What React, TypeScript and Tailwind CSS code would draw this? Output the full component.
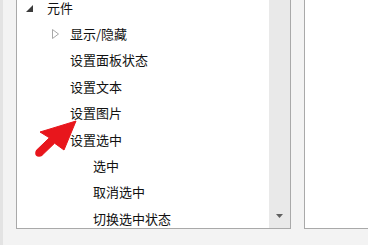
const font = { fontFamily: '"Noto Sans CJK SC", "Noto Sans", sans-serif' };

function FilledCaret() {
  return (
    <svg width="7" height="7" viewBox="0 0 7 7" className="mt-[3px]">
      <polygon points="7,0 7,7 0,7" fill="#3c3c3c" />
    </svg>
  );
}

function HollowCaret() {
  return (
    <svg width="7" height="10" viewBox="0 0 7 10">
      <polygon points="0.5,0.5 6.5,5 0.5,9.5" fill="none" stroke="#a8a8a8" strokeWidth="1" />
    </svg>
  );
}

type Item = { label: string; pad: string; icon?: 'open' | 'closed'; iconBox?: string };

const items: Item[] = [
  { label: '元件', pad: 'pl-[9px]', icon: 'open', iconBox: 'w-[21px]' },
  { label: '显示/隐藏', pad: 'pl-[35px]', icon: 'closed', iconBox: 'w-[18px]' },
  { label: '设置面板状态', pad: 'pl-[53px]' },
  { label: '设置文本', pad: 'pl-[53px]' },
  { label: '设置图片', pad: 'pl-[53px]' },
  { label: '设置选中', pad: 'pl-[53px]' },
  { label: '选中', pad: 'pl-[76px]' },
  { label: '取消选中', pad: 'pl-[76px]' },
  { label: '切换选中状态', pad: 'pl-[76px]' },
];

export default function App() {
  return (
    <div className="relative flex w-[368px] h-[245px] overflow-hidden bg-[#f3f3f3]" style={font}>
      <div className="w-[3px] h-full bg-[#e3e3e3]" />
      <div className="w-[13px]" />

      {/* tree panel */}
      <div className="flex h-[229px] w-[275px] bg-white border-l border-r border-b border-[#a9a9a9]">
        <div className="flex-1 overflow-hidden">
          <div className="mt-[-6px]">
            {items.map((it) => (
              <div key={it.label} className={`flex items-center h-[26.4px] ${it.pad}`}>
                {it.icon && (
                  <div className={`flex items-center ${it.iconBox}`}>
                    {it.icon === 'open' ? <FilledCaret /> : <HollowCaret />}
                  </div>
                )}
                <span className="text-[13px] leading-none text-[#111] whitespace-nowrap">{it.label}</span>
              </div>
            ))}
          </div>
        </div>
        <div className="w-[21px] bg-[#e9e9e9] flex flex-col justify-end items-center pb-[10px]">
          <svg width="7" height="4" viewBox="0 0 7 4">
            <polygon points="0,0 7,0 3.5,4" fill="#606060" />
          </svg>
        </div>
      </div>

      <div className="w-[13px]" />

      {/* right panel */}
      <div className="flex-1 h-[229px] bg-white border-l border-b border-[#a9a9a9]" />

      {/* red pointer arrow */}
      <svg className="absolute left-0 top-0 pointer-events-none" width="368" height="245" viewBox="0 0 368 245">
        <polygon
          points="76,121 64,150 54.6,143.2 41.6,155.7 36.4,150.3 49.4,137.8 40,132"
          fill="#e8161c"
          stroke="#e8161c"
          strokeWidth="1"
          strokeLinejoin="round"
        />
        <circle cx="39" cy="153" r="3.8" fill="#e8161c" />
      </svg>
    </div>
  );
}
